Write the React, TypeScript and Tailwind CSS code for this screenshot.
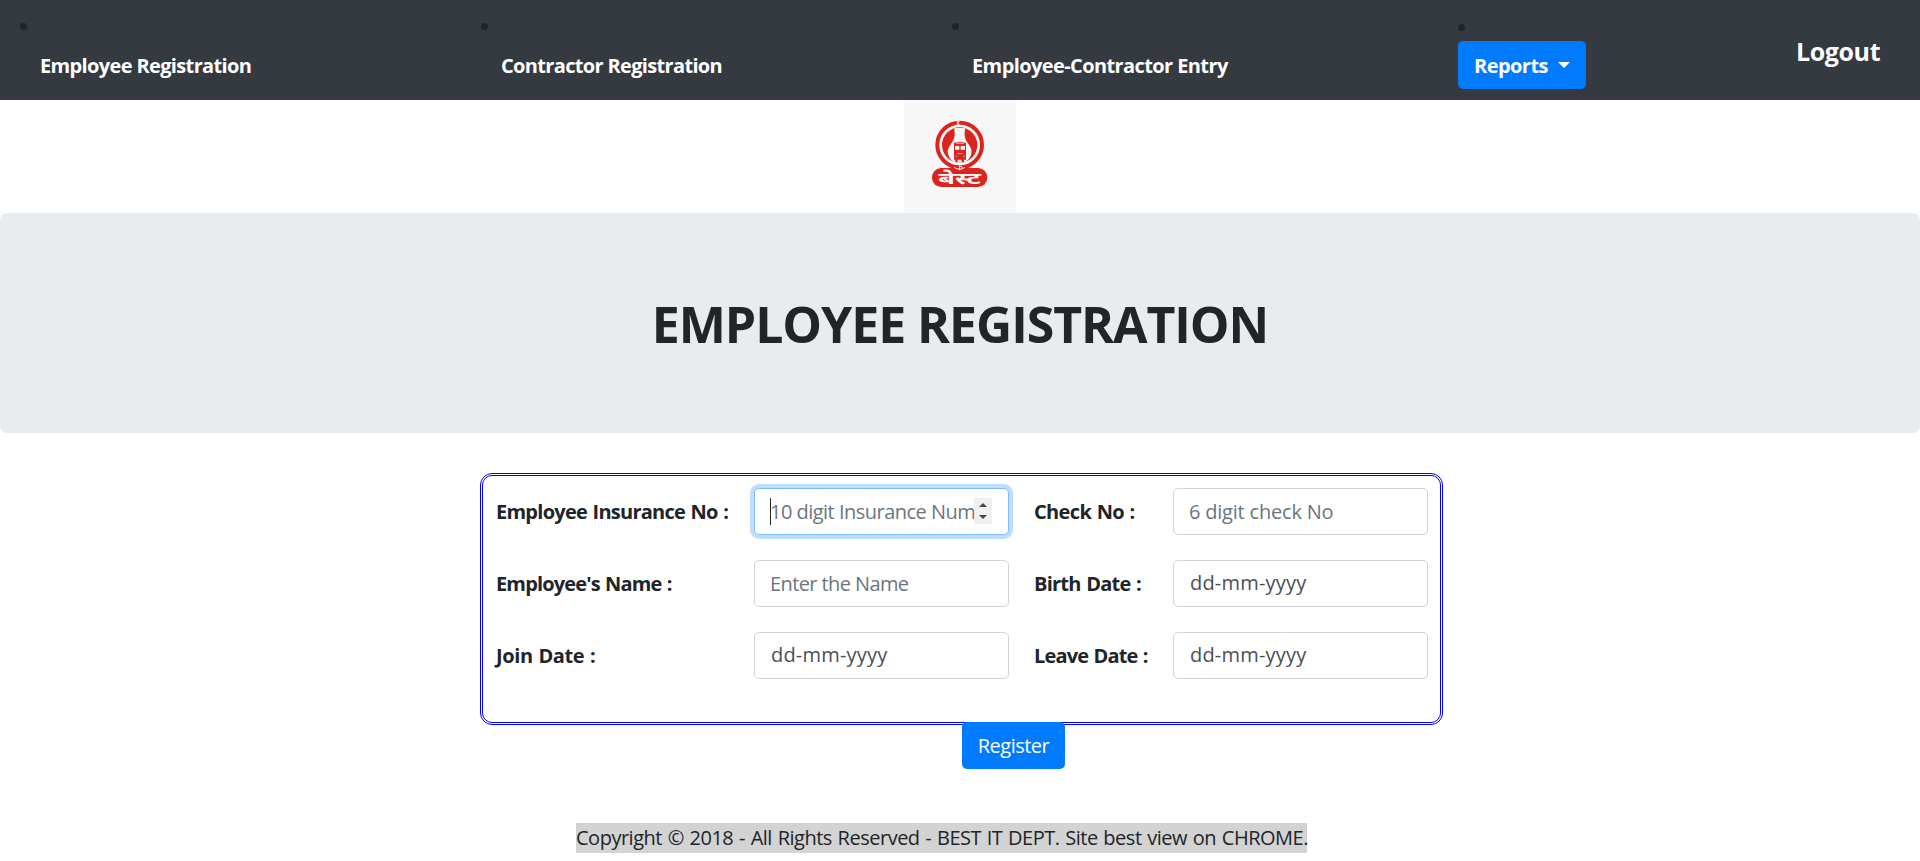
import type { ReactNode } from "react";

function NavItem({ width, children, low = false }: { width: string; children: ReactNode; low?: boolean }) {
  return (
    <li className={`flex shrink-0 flex-col items-start ${width}`}>
      <span className={`h-[7px] w-[7px] shrink-0 rounded-full bg-[#212529] ${low ? "mt-6" : "mt-[23px]"}`} />
      {children}
    </li>
  );
}

function NavLink({ label, tracking }: { label: string; tracking: string }) {
  return (
    <a href="#" className={`mt-[21px] pl-5 text-[20px] leading-[30px] font-bold whitespace-nowrap text-white ${tracking}`}>
      {label}
    </a>
  );
}

function Label({ text, tracking }: { text: string; tracking: string }) {
  return (
    <label className={`flex h-[47px] items-center pt-px text-[20px] font-bold whitespace-nowrap text-[#212529] [word-spacing:1px] ${tracking}`}>
      {text}
    </label>
  );
}

function Field({ placeholder, className }: { placeholder: string; className: string }) {
  return (
    <input
      type="text"
      placeholder={placeholder}
      className={`h-[47px] w-full rounded-[5px] border border-[#ced4da] bg-white pr-4 pl-[15px] text-[20px] placeholder:opacity-100 ${className}`}
    />
  );
}

const DATE = "pt-0 pb-[2px] tracking-[0.2px] pl-4! placeholder:text-[#495057]";

function Logo() {
  return (
    <svg width="112" height="113" viewBox="0 0 336 339" className="block">
      <rect width="336" height="339" fill="#f7f7f7" />
      <circle cx="167" cy="135" r="67" fill="none" stroke="#dc241f" strokeWidth="12" />
      <circle cx="167" cy="135" r="53" fill="#dc241f" />
      <path
        d="M153 84 h29 c2 3 2 7 0 10 c-1 14 1 25 11 38 c9 13 12 20 8 32 c-5 16 -17 24 -34 24 s-29 -8 -34 -24 c-4 -12 -1 -19 8 -32 c10 -13 12 -24 11 -38 c-2 -3 -2 -7 1 -10z"
        fill="#f7f7f7"
      />
      <path d="M150 129 q18 -6 36 0 v50 h-6 v8 h-7 v-8 h-12 v8 h-7 v-8 h-4z" fill="#dc241f" />
      <path d="M153 138h13v11h-13zM170 138h13v11h-13z" fill="#f7f7f7" />
      <path d="M156 130h24M160 161h16M154 169h5M177 169h5" stroke="#f7f7f7" strokeWidth="2" />
      <path d="M157 62 l7 7 l-7 7 M169 61 l-9 8 l9 8" fill="none" stroke="#f7f7f7" strokeWidth="3" />
      <path d="M164 69 h8" stroke="#dc241f" strokeWidth="4" />
      <rect x="84" y="204" width="166" height="57" rx="28" fill="#dc241f" />
      <path d="M150 202 q18 11 33 0" fill="none" stroke="#f7f7f7" strokeWidth="3" />
      <path d="M167 196 l9 7 l-9 7z" fill="#dc241f" stroke="#f7f7f7" strokeWidth="3" />
      <text
        x="167"
        y="251"
        textAnchor="middle"
        textLength="128"
        lengthAdjust="spacingAndGlyphs"
        fontSize="48"
        fontWeight="700"
        fill="#f7f7f7"
        className="font-['Noto_Sans',sans-serif]"
      >
        बेस्ट
      </text>
    </svg>
  );
}

export default function App() {
  return (
    <div className="h-[861px] w-full overflow-hidden bg-white font-['Open_Sans','Noto_Sans',sans-serif] text-[#212529] [font-synthesis:none]">
      <nav className="flex h-[100px] bg-[#343a40] pl-5">
        <ul className="flex">
          <NavItem width="w-[461px]">
            <NavLink label="Employee Registration" tracking="tracking-[-0.64px]" />
          </NavItem>
          <NavItem width="w-[471px]">
            <NavLink label="Contractor Registration" tracking="tracking-[-0.66px]" />
          </NavItem>
          <NavItem width="w-[506px]">
            <NavLink label="Employee-Contractor Entry" tracking="tracking-[-0.6px]" />
          </NavItem>
          <NavItem width="w-[338px]" low>
            <button className="mt-[10px] flex h-12 w-32 items-center rounded-[5px] bg-[#007bff] pt-px pl-4 text-[20px] font-bold tracking-[-0.55px] text-white">
              Reports
              <svg width="12" height="6" viewBox="0 0 12 6" className="mb-px ml-[10px]">
                <path d="M0 0H12L6 6Z" fill="#fff" />
              </svg>
            </button>
          </NavItem>
        </ul>
        <a href="#" className="mt-[33px] text-[25px] leading-[37px] font-bold tracking-[-0.4px] text-white">
          Logout
        </a>
      </nav>

      <div className="flex h-[113px] justify-center">
        <Logo />
      </div>

      <header className="flex h-[220px] items-center justify-center rounded-[7px] bg-[#e9ecef]">
        <h1 className="mt-px text-[50px] leading-[60px] font-bold tracking-[-1.05px]">EMPLOYEE REGISTRATION</h1>
      </header>

      <form className="mt-10 ml-[480px] grid h-[252px] w-[963px] grid-cols-[258px_255px_25px_139px_255px] content-start gap-y-[25px] rounded-[12px] border-[3px] border-double border-[#0000ff] pt-3 pl-[13px]">
        <Label text="Employee Insurance No :" tracking="tracking-[-0.74px]" />
        <div className="relative">
          <Field
            placeholder="10 digit Insurance Num"
            className="border-[#80bdff]! tracking-[-0.52px] shadow-[0_0_0_4px_rgba(0,123,255,0.25)] placeholder:text-[#6c757d]"
          />
          <span className="absolute top-[10px] left-4 h-[27px] w-px bg-[#212529]" />
          <span className="absolute top-[10px] left-[220px] flex h-[26px] w-[18px] items-center justify-center bg-[#efefef]">
            <svg width="8" height="16" viewBox="0 0 8 16">
              <path d="M0 4L4 0L8 4ZM0 12L4 16L8 12Z" fill="#454545" />
            </svg>
          </span>
        </div>
        <span />
        <Label text="Check No :" tracking="tracking-[-0.65px]" />
        <Field placeholder="6 digit check No" className="tracking-[-0.2px] placeholder:text-[#6c757d]" />

        <Label text="Employee's Name :" tracking="tracking-[-0.85px]" />
        <Field placeholder="Enter the Name" className="tracking-[-0.6px] placeholder:text-[#6c757d]" />
        <span />
        <Label text="Birth Date :" tracking="tracking-[-0.75px]" />
        <Field placeholder="dd-mm-yyyy" className={DATE} />

        <Label text="Join Date :" tracking="tracking-[-0.4px]" />
        <Field placeholder="dd-mm-yyyy" className={DATE} />
        <span />
        <Label text="Leave Date :" tracking="tracking-[-0.85px]" />
        <Field placeholder="dd-mm-yyyy" className={DATE} />
      </form>

      <div className="relative -mt-[3px] ml-[962px] flex">
        <button className="h-[47px] w-[103px] rounded-[5px] bg-[#007bff] text-[20px] tracking-[-0.5px] text-white">Register</button>
      </div>

      <footer className="mt-[54px] ml-[576px] flex">
        <p className="h-[30px] w-[731px] bg-[#d3d3d3] text-[20px] leading-[30px] tracking-[-0.49px] whitespace-nowrap [word-spacing:1px]">
          Copyright © 2018 - All Rights Reserved - BEST IT DEPT. Site best view on CHROME.
        </p>
      </footer>
    </div>
  );
}
